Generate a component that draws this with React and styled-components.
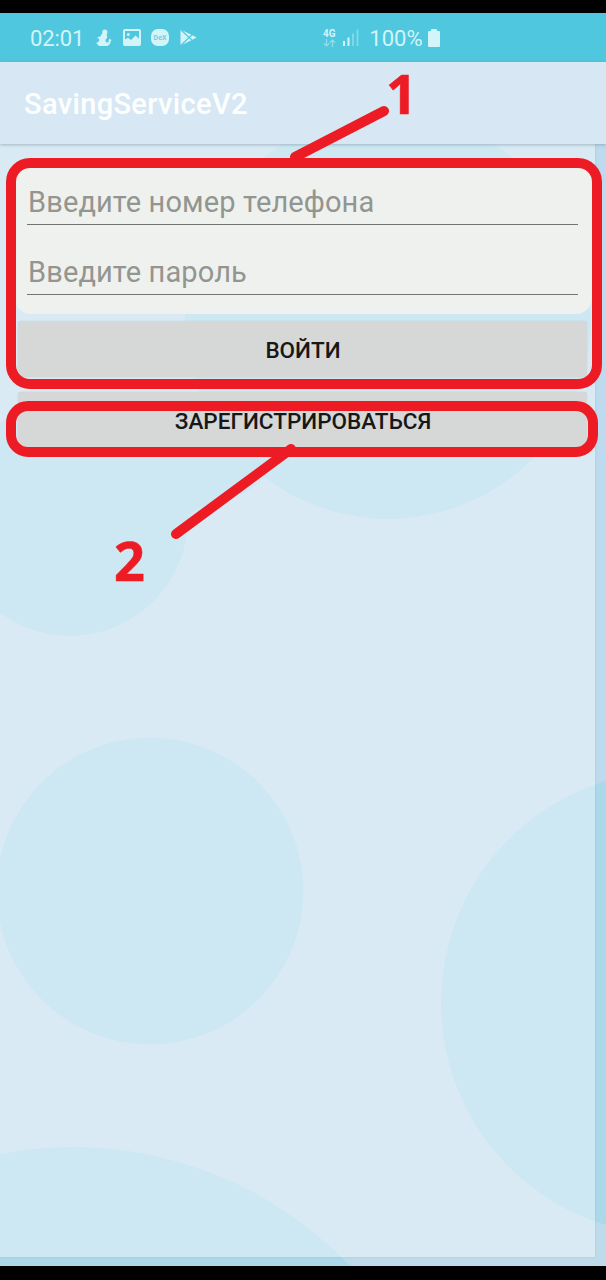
import React from "react";
import styled, { createGlobalStyle } from "styled-components";

const GlobalStyle = createGlobalStyle`
  * { box-sizing: border-box; }
  body { margin: 0; background: #000; font-family: Roboto, "Noto Sans", sans-serif; }
`;

const Phone = styled.div`
  position: relative;
  width: 606px;
  height: 1280px;
  padding: 13px 0 14px;
  display: flex;
  flex-direction: column;
  background: #000;
  overflow: hidden;
`;

const StatusBar = styled.div`
  height: 49px;
  flex: none;
  display: flex;
  align-items: center;
  padding-left: 30px;
  background: #4fc8df;
  color: #d3f4f9;
`;

const StatusText = styled.span`
  font-size: 22px;
  line-height: 26px;
  letter-spacing: ${(p) => p.$spacing || "0"};
  margin-right: ${(p) => p.$gap};
  padding-top: 2px;
`;

const StatusIcon = styled.svg`
  display: block;
  flex: none;
  margin-right: ${(p) => p.$gap || "0"};
`;

const Network = styled.div`
  display: flex;
  flex-direction: column;
  align-items: center;
  width: 14px;
  margin-right: 7px;
  font-size: 10px;
  font-weight: 700;
  line-height: 11px;
`;

const AppBar = styled.header`
  position: relative;
  height: 82px;
  flex: none;
  display: flex;
  align-items: center;
  padding: 2px 24px 0;
  background: #d7e8f4;
  box-shadow: 0 1px 3px rgba(60, 90, 110, 0.35);
  z-index: 1;
`;

const Title = styled.h1`
  margin: 0;
  font-size: 29px;
  font-weight: 500;
  line-height: 36px;
  letter-spacing: 0.35px;
  color: #fdffff;
`;

const Screen = styled.main`
  position: relative;
  flex: 1;
  overflow: hidden;
  padding: 0 11px 9px 0;
  background: #bedbec;
`;

const Wallpaper = styled.svg`
  position: absolute;
  inset: 0;
  display: block;
`;

const Sheet = styled.section`
  position: relative;
  height: 100%;
  padding: 22px 7px 0 15px;
  background: rgba(255, 255, 255, 0.42);
  box-shadow: 0 0 3px rgba(100, 150, 170, 0.2);
`;

const Fields = styled.div`
  width: 577px;
  height: 148px;
  padding: 14px 14px 0 12px;
  border-radius: 16px;
  background: #eff1ee;
`;

const Field = styled.input`
  display: block;
  width: 551px;
  height: 45px;
  margin-bottom: 25px;
  padding: 0 0 1px 1px;
  border: 0;
  border-bottom: 1px solid #737373;
  border-radius: 0;
  outline: 0;
  background: transparent;
  font: 400 29px/44px Roboto, "Noto Sans", sans-serif;
  letter-spacing: 0.12px;
  &::placeholder { color: #939590; opacity: 1; }
`;

const Actions = styled.div`
  display: flex;
  flex-direction: column;
  gap: 15px;
  padding: 7px 0 0 3px;
`;

const Button = styled.button`
  width: 569px;
  height: ${(p) => p.$height};
  padding: ${(p) => p.$top} 0 0 1px;
  border: 0;
  border-radius: 4px;
  background: #d6d8d7;
  box-shadow: 0 0 1px rgba(110, 150, 170, 0.5);
  color: #171717;
  font: 500 22.5px/28px Roboto, "Noto Sans", sans-serif;
`;

const Markup = styled.svg`
  position: absolute;
  inset: 0;
  z-index: 2;
  pointer-events: none;
`;

const Callout = styled.span`
  position: absolute;
  z-index: 3;
  left: ${(p) => p.$x};
  top: ${(p) => p.$y};
  font: 700 54px/60px "Open Sans", "Noto Sans", sans-serif;
  color: #ed1c24;
  -webkit-text-stroke: 0.6px #ed1c24;
`;

export default function App() {
  return (
    <>
      <GlobalStyle />
      <Phone>
        <StatusBar>
          <StatusText $gap="12px" $spacing="-0.1px">02:01</StatusText>
          <StatusIcon $gap="11px" width="16" height="18" viewBox="0 0 16 18" fill="currentColor">
            <circle cx="8.8" cy="3" r="2.6" />
            <path d="M6.6 4 10.6 4.6 11.2 8.5 9.3 11.2 10.4 13.6 12.6 13.2 12.8 11.6 12 11.8 14 9.6 15.6 12 14.8 11.8 14 15 11.5 17 3 17 .2 14 3 12.6 3.2 10 1 8.8 4.4 7.2Z" />
          </StatusIcon>
          <StatusIcon $gap="10px" width="18" height="17" viewBox="0 0 18 17">
            <rect x="1" y="1" width="16" height="15" rx="1" fill="none" stroke="currentColor" strokeWidth="2" />
            <circle cx="5.3" cy="5.5" r="1.5" fill="currentColor" />
            <path d="M1 11 5 8.7 8 11 12.5 6.6 17 10.5V16H1Z" fill="currentColor" />
          </StatusIcon>
          <StatusIcon $gap="11px" width="18" height="17" viewBox="0 0 18 17">
            <rect width="18" height="17" rx="7" fill="currentColor" />
            <text x="9" y="11" textAnchor="middle" fontFamily="Roboto" fontSize="7" fontWeight="700" fill="#6fcfe0">DeX</text>
          </StatusIcon>
          <StatusIcon $gap="125px" width="17" height="17" viewBox="0 0 17 17">
            <path d="M.5 .5 13 6.5 16.5 8.5 13 10.5 .5 16.5Z" fill="currentColor" />
            <path d="M.5 .5 12.5 11.5M.5 16.5 12.5 5.5" stroke="#4fc8df" strokeWidth="1.2" />
          </StatusIcon>
          <Network>
            <span>4G</span>
            <StatusIcon width="13" height="8" viewBox="0 0 13 8" fill="none" stroke="#91dfeb" strokeWidth="1.2">
              <path d="M3.5 0V7M.8 4.3 3.5 7 6.2 4.3M9.5 8V1M6.8 3.7 9.5 1 12.2 3.7" />
            </StatusIcon>
          </Network>
          <StatusIcon $gap="10px" width="16" height="17" viewBox="0 0 16 17">
            <path d="M1 12V17M5.5 8.5V17" stroke="currentColor" strokeWidth="2" />
            <path d="M10 4.5V17M14.5 .5V17" stroke="#87dbe8" strokeWidth="1.7" />
          </StatusIcon>
          <StatusText $gap="5px">100%</StatusText>
          <StatusIcon width="12" height="18" viewBox="0 0 12 18" fill="currentColor">
            <path d="M3 2V.8Q3 0 4 0H8Q9 0 9 .8V2H11Q12 2 12 3V17Q12 18 11 18H1Q0 18 0 17V3Q0 2 1 2Z" />
          </StatusIcon>
        </StatusBar>
        <AppBar>
          <Title>SavingServiceV2</Title>
        </AppBar>
        <Screen>
          <Wallpaper width="606" height="1122" viewBox="0 144 606 1122" fill="#abd8ea">
            <path d="M595 144H606V780H595Z" fill="#bddaef" />
            <circle cx="70" cy="518" r="118" />
            <ellipse cx="388" cy="317" rx="203" ry="202" />
            <path d="M90 402Q180 425 198 390L264 478Q240 500 212 506Q190 508 188 520H150Z" />
            <circle cx="150" cy="891" r="153.5" />
            <circle cx="673" cy="1003" r="232" />
            <circle cx="73" cy="1529" r="382" />
          </Wallpaper>
          <Sheet>
            <Fields>
              <Field placeholder="Введите номер телефона" aria-label="Введите номер телефона" />
              <Field type="password" placeholder="Введите пароль" aria-label="Введите пароль" />
            </Fields>
            <Actions>
              <Button $height="56px" $top="2px">ВОЙТИ</Button>
              <Button $height="57px" $top="0">ЗАРЕГИСТРИРОВАТЬСЯ</Button>
            </Actions>
          </Sheet>
        </Screen>
        <Markup width="606" height="1280" fill="none" stroke="#ed1c24" strokeWidth="10" strokeLinecap="round">
          <rect x="11" y="163" width="586" height="221" rx="19" />
          <rect x="11" y="406" width="582" height="46" rx="17" />
          <path d="M295 157 384 111M291 449 176 534" />
        </Markup>
        <Callout $x="386px" $y="63px">1</Callout>
        <Callout $x="114px" $y="530px">2</Callout>
      </Phone>
    </>
  );
}
